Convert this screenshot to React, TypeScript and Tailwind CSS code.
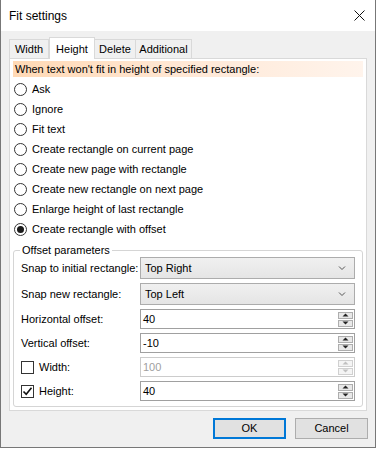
import React from "react";

const font = { fontFamily: '"Liberation Sans", Arial, sans-serif' };

function Radio({ label, checked }: { label: string; checked?: boolean }) {
  return (
    <div className="flex items-center h-[20px] pl-[1px]">
      <div className="w-[13px] h-[13px] shrink-0 rounded-full border border-[#333] bg-white flex items-center justify-center">
        {checked && <div className="w-[7px] h-[7px] rounded-full bg-[#1a1a1a]" />}
      </div>
      <span className="ml-[5px] text-[11px] leading-none whitespace-nowrap">{label}</span>
    </div>
  );
}

function Chevron() {
  return (
    <svg width="8" height="6" viewBox="0 0 8 6" className="mr-[8px]">
      <path d="M1 1.5 L4 4.5 L7 1.5" stroke="#555" strokeWidth="1" fill="none" />
    </svg>
  );
}

function Select({ value }: { value: string }) {
  return (
    <div className="w-[215px] h-[22px] shrink-0 border border-[#acacac] bg-gradient-to-b from-[#f0f0f0] to-[#e5e5e5] flex items-center justify-between">
      <span className="pl-[4px] text-[11px]">{value}</span>
      <Chevron />
    </div>
  );
}

function Spin({ disabled }: { disabled?: boolean }) {
  const c = disabled ? "#c0c0c0" : "#222";
  const b = disabled ? "border-[#d0d0d0] bg-[#f4f4f4]" : "border-[#adadad] bg-[#e8e8e8]";
  return (
    <div className="flex flex-col gap-[1px] mr-[1px]">
      <div className={`w-[15px] h-[7px] border ${b} flex items-center justify-center`}>
        <svg width="7" height="4" viewBox="0 0 7 4"><path d="M0.5 3.5 L3.5 0.5 L6.5 3.5 Z" fill={c} /></svg>
      </div>
      <div className={`w-[15px] h-[7px] border ${b} flex items-center justify-center`}>
        <svg width="7" height="4" viewBox="0 0 7 4"><path d="M0.5 0.5 L3.5 3.5 L6.5 0.5 Z" fill={c} /></svg>
      </div>
    </div>
  );
}

function NumInput({ value, disabled }: { value: string; disabled?: boolean }) {
  return (
    <div
      className={`w-[215px] h-[20px] shrink-0 border ${
        disabled ? "border-[#cccccc]" : "border-[#a0a0a0]"
      } bg-white flex items-center justify-between`}
    >
      <span className={`pl-[2px] text-[11px] ${disabled ? "text-[#a0a0a0]" : "text-black"}`}>{value}</span>
      <Spin disabled={disabled} />
    </div>
  );
}

function Check({ checked }: { checked?: boolean }) {
  return (
    <div className="w-[13px] h-[13px] border border-[#333] bg-white flex items-center justify-center">
      {checked && (
        <svg width="11" height="11" viewBox="0 0 11 11">
          <path d="M1.5 5.5 L4.2 8.3 L9.5 1.8" stroke="#111" strokeWidth="1.6" fill="none" />
        </svg>
      )}
    </div>
  );
}

export default function App() {
  return (
    <div className="w-[376px] h-[449px] bg-white" style={font}>
      <div className="w-[376px] h-[448px] border-l border-r border-b border-[#777777] bg-[#f0f0f0] flex flex-col text-black">
        {/* Title bar */}
        <div className="h-[31px] bg-white flex items-center justify-between pl-[8px] pr-[10px]">
          <span className="text-[12px]">Fit settings</span>
          <svg width="11" height="11" viewBox="0 0 11 11">
            <path d="M0.5 0.5 L10.5 10.5 M10.5 0.5 L0.5 10.5" stroke="#111" strokeWidth="1" />
          </svg>
        </div>

        {/* Body */}
        <div className="flex flex-col px-[8px] pt-[6px]">
          {/* Tabs */}
          <div className="flex items-end h-[21px] relative z-10">
            <div className="w-[40px] h-[19px] border border-b-0 border-[#d9d9d9] bg-[#f0f0f0] flex items-center justify-center text-[11px]">
              Width
            </div>
            <div className="w-[46px] h-[22px] -mb-px border border-b-0 border-[#d9d9d9] bg-white flex items-start justify-center pt-[3px] text-[11px]">
              Height
            </div>
            <div className="w-[41px] h-[19px] border border-b-0 border-l-0 border-[#d9d9d9] bg-[#f0f0f0] flex items-center justify-center text-[11px]">
              Delete
            </div>
            <div className="w-[56px] h-[19px] border border-b-0 border-l-0 border-[#d9d9d9] bg-[#f0f0f0] flex items-center justify-center text-[11px]">
              Additional
            </div>
          </div>

          {/* Panel */}
          <div className="h-[353px] border border-[#d9d9d9] bg-white px-[3px] pt-[2px]">
            <div className="h-[16px] bg-gradient-to-r from-[#ffd9b5] via-[#ffe8d6] to-[#fff4ec] flex items-center pl-[2px] text-[11px] whitespace-nowrap">
              When text won't fit in height of specified rectangle:
            </div>
            <div className="flex flex-col mt-[2px]">
              <Radio label="Ask" />
              <Radio label="Ignore" />
              <Radio label="Fit text" />
              <Radio label="Create rectangle on current page" />
              <Radio label="Create new page with rectangle" />
              <Radio label="Create new rectangle on next page" />
              <Radio label="Enlarge height of last rectangle" />
              <Radio label="Create rectangle with offset" checked />
            </div>

            <fieldset className="mt-[3px] border border-[#d5d5d5] rounded-[3px] px-[7px] pb-[5px] pt-0">
              <legend className="ml-[-1px] px-[2px] text-[11px] leading-[16px]">Offset parameters</legend>
              <div className="flex flex-col gap-[4px] mt-[-1px]">
                <div className="flex items-center justify-between h-[22px]">
                  <span className="text-[11px] whitespace-nowrap">Snap to initial rectangle:</span>
                  <Select value="Top Right" />
                </div>
                <div className="flex items-center justify-between h-[22px]">
                  <span className="text-[11px] whitespace-nowrap">Snap new rectangle:</span>
                  <Select value="Top Left" />
                </div>
                <div className="flex items-center justify-between h-[20px]">
                  <span className="text-[11px] whitespace-nowrap">Horizontal offset:</span>
                  <NumInput value="40" />
                </div>
                <div className="flex items-center justify-between h-[20px]">
                  <span className="text-[11px] whitespace-nowrap">Vertical offset:</span>
                  <NumInput value="-10" />
                </div>
                <div className="flex items-center justify-between h-[20px]">
                  <div className="flex items-center">
                    <Check />
                    <span className="ml-[5px] text-[11px]">Width:</span>
                  </div>
                  <NumInput value="100" disabled />
                </div>
                <div className="flex items-center justify-between h-[20px]">
                  <div className="flex items-center">
                    <Check checked />
                    <span className="ml-[5px] text-[11px]">Height:</span>
                  </div>
                  <NumInput value="40" />
                </div>
              </div>
            </fieldset>
          </div>

          {/* Buttons */}
          <div className="flex justify-end gap-[9px] mt-[7px] mr-[-1px]">
            <div className="w-[73px] h-[21px] border-2 border-[#0078d7] bg-[#e1e1e1] flex items-center justify-center text-[11px]">
              OK
            </div>
            <div className="w-[73px] h-[21px] border border-[#adadad] bg-[#e1e1e1] flex items-center justify-center text-[11px]">
              Cancel
            </div>
          </div>
        </div>
      </div>
    </div>
  );
}
